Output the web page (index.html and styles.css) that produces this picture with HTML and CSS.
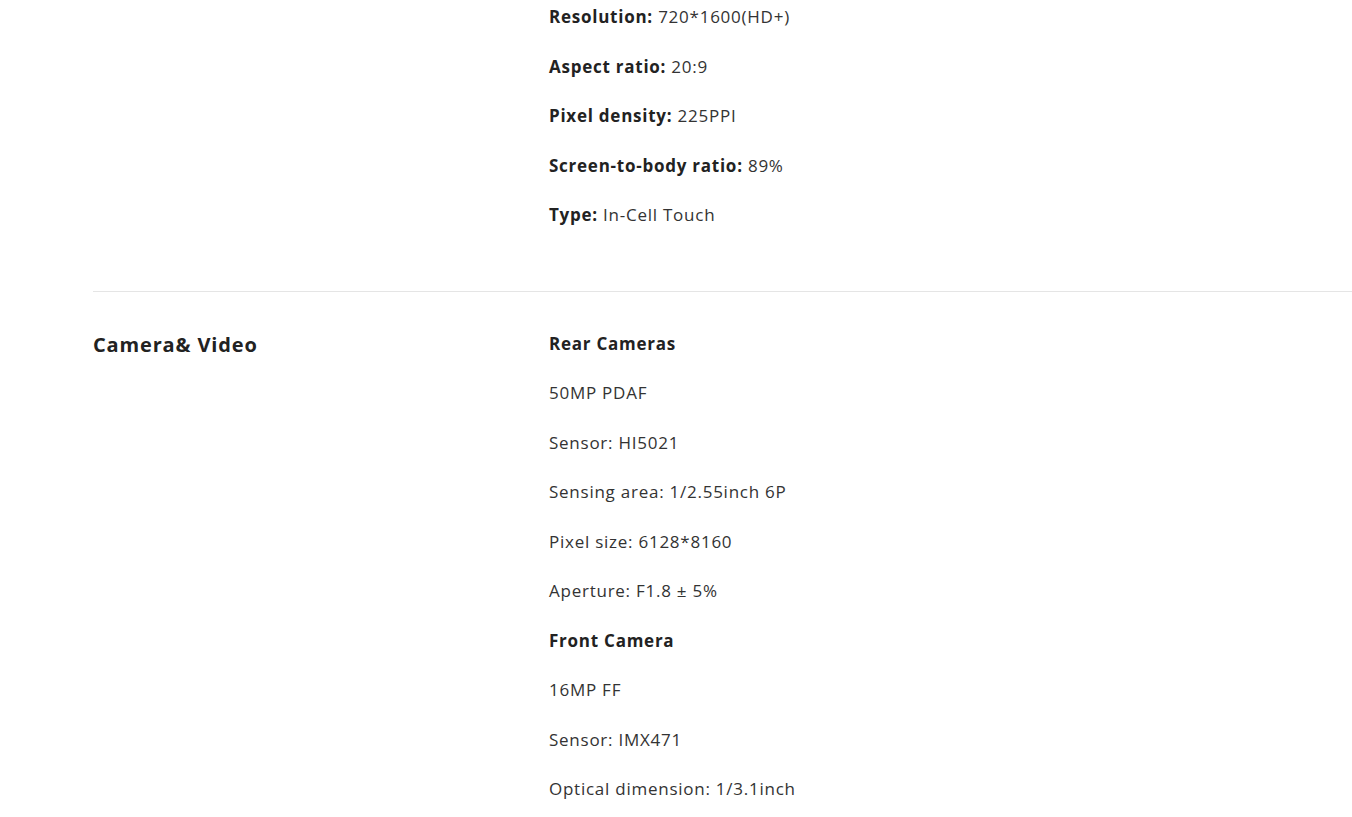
FILE: index.html
```html
<!DOCTYPE html>
<html lang="en">
<head>
<meta charset="utf-8">
<title>Specs</title>
<link rel="stylesheet" href="styles.css">
</head>
<body>
<div class="specs">
  <section class="row row-first">
    <h3 class="row-title"></h3>
    <div class="row-body">
      <p><strong>Resolution:</strong> 720*1600(HD+)</p>
      <p><strong>Aspect ratio:</strong> 20:9</p>
      <p><strong>Pixel density:</strong> 225PPI</p>
      <p><strong>Screen-to-body ratio:</strong> 89%</p>
      <p><strong>Type:</strong> In-Cell Touch</p>
    </div>
  </section>
  <section class="row">
    <h3 class="row-title">Camera&amp; Video</h3>
    <div class="row-body">
      <p class="sub">Rear Cameras</p>
      <p>50MP PDAF</p>
      <p>Sensor: HI5021</p>
      <p>Sensing area: 1/2.55inch 6P</p>
      <p>Pixel size: 6128*8160</p>
      <p>Aperture: F1.8 ± 5%</p>
      <p class="sub">Front Camera</p>
      <p>16MP FF</p>
      <p>Sensor: IMX471</p>
      <p>Optical dimension: 1/3.1inch</p>
    </div>
  </section>
</div>
</body>
</html>
```
FILE: styles.css
```css
html, body {
  margin: 0;
  padding: 0;
  background: #ffffff;
}
body {
  font-family: "Open Sans", "DejaVu Sans", sans-serif;
  color: #333333;
  overflow: hidden;
}
.specs {
  margin-left: 93px;
}
.row {
  display: grid;
  grid-template-columns: 456px 1fr;
  padding: 37px 0 21px;
  border-top: 1px solid #e5e5e5;
}
.row-first {
  border-top: none;
  padding-top: 2px;
  padding-bottom: 41px;
}
.row-title {
  margin: 0;
  padding-top: 1px;
  font-size: 20px;
  font-weight: 700;
  color: #222222;
  line-height: 30px;
  letter-spacing: 0.85px;
}
.row-body p {
  margin: 0 0 20px;
  font-size: 17px;
  line-height: 29.5px;
  letter-spacing: 0.75px;
}
.row-body strong,
.row-body .sub {
  font-weight: 700;
  color: #222222;
}
```
